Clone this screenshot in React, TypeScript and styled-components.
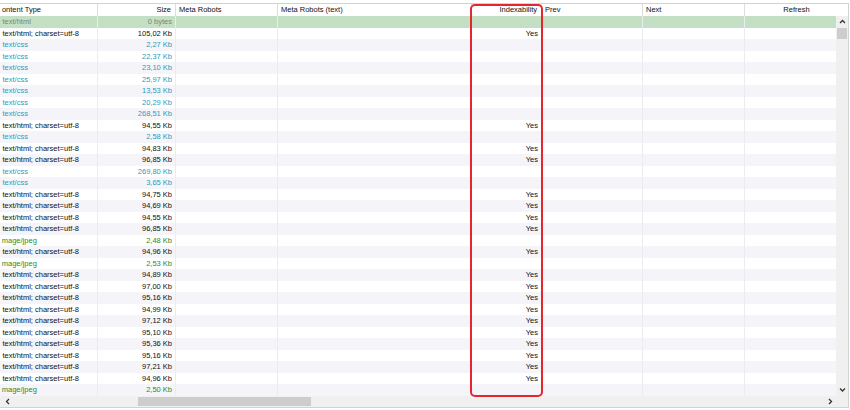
import React from "react";
import styled, { createGlobalStyle } from "styled-components";

const Global = createGlobalStyle`
  html, body { margin: 0; padding: 0; background: #ffffff; overflow: hidden; }
  body { font-family: "Liberation Sans", Arial, sans-serif; }
`;

const COLS = "98px 78px 102px 194px 70px 101px 102px";

const Frame = styled.div`
  position: relative;
  margin-top: 3px;
  width: 849px;
  height: 405px;
  box-sizing: border-box;
  border-top: 1px solid #d2d2d2;
  border-right: 1px solid #d2d2d2;
  border-bottom: 1px solid #d2d2d2;
  display: flex;
  flex-direction: column;
  font-size: 7.5px;
  overflow: hidden;
`;

const HeaderRow = styled.div`
  display: grid;
  grid-template-columns: ${COLS} 1fr;
  height: 12px;
  background: #ffffff;
  color: #111111;
`;

type Align = "left" | "right" | "center";

const HeadCell = styled.div<{ $align: Align }>`
  box-sizing: border-box;
  border-right: 1px solid #dedede;
  line-height: 12px;
  white-space: nowrap;
  overflow: hidden;
  text-align: ${(p) => p.$align};
  padding: ${(p) => (p.$align === "right" ? "0 4px 0 0" : p.$align === "left" ? "0 0 0 3px" : "0")};
  &:last-child { border-right: none; }
`;

const FirstHeadCell = styled(HeadCell)`
  padding-left: 2px;
`;

const Clip = styled.span<{ $indent: number }>`
  display: block;
  overflow: hidden;
  white-space: nowrap;
  text-indent: ${(p) => p.$indent}px;
`;

const Middle = styled.div`
  display: flex;
  flex: 0 0 auto;
`;

const Rows = styled.div`
  width: 836px;
  display: flex;
  flex-direction: column;
`;

type Kind = "root" | "html" | "css" | "jpeg";

const kindColor: Record<Kind, string> = {
  root: "#7a857a",
  html: "#111111",
  css: "#2a9dbf",
  jpeg: "#2b8a2b",
};

const Row = styled.div<{ $kind: Kind; $stripe: boolean }>`
  display: grid;
  grid-template-columns: ${COLS} 91px;
  height: 11.5px;
  line-height: 11.5px;
  color: ${(p) => kindColor[p.$kind]};
  background: ${(p) =>
    p.$kind === "root" ? "#c4e0c4" : p.$stripe ? "#f4f4f9" : "#ffffff"};
`;

const Cell = styled.div<{ $align: Align; $plain?: boolean }>`
  box-sizing: border-box;
  border-right: 1px solid #ebebf0;
  white-space: nowrap;
  overflow: hidden;
  text-align: ${(p) => p.$align};
  padding: ${(p) => (p.$align === "right" ? "0 3px 0 0" : "0 0 0 3px")};
  color: ${(p) => (p.$plain ? "#111111" : "inherit")};
  &:last-child { border-right: none; }
`;

const FirstCell = styled(Cell)`
  padding-left: 2px;
`;

const VScroll = styled.div`
  width: 12px;
  background: #f0f0f0;
  display: flex;
  flex-direction: column;
  align-items: center;
  box-sizing: border-box;
  padding: 3px 0 3px 0;
`;

const VThumb = styled.div`
  width: 10px;
  height: 11px;
  margin-top: 3px;
  background: #cdcdcd;
`;

const Spacer = styled.div`
  flex: 1;
`;

const Bottom = styled.div`
  display: flex;
  flex: 1;
  background: #f0f0f0;
`;

const HTrack = styled.div`
  width: 836px;
  display: flex;
  align-items: center;
  box-sizing: border-box;
  padding: 0 3px 0 5px;
`;

const HThumb = styled.div`
  width: 173px;
  height: 9px;
  margin-left: 127px;
  background: #cdcdcd;
`;

const Corner = styled.div`
  flex: 1;
  background: #f0f0f0;
`;

const Highlight = styled.div`
  position: absolute;
  left: 470px;
  top: 0px;
  width: 73px;
  height: 393px;
  box-sizing: border-box;
  border: 2px solid #e6262e;
  border-radius: 5px;
  pointer-events: none;
`;

const Chevron = ({ dir }: { dir: "up" | "down" | "left" | "right" }) => {
  const pts: Record<string, string> = {
    up: "1,4 3.5,1.5 6,4",
    down: "1,1.5 3.5,4 6,1.5",
    left: "4,1 1.5,3.5 4,6",
    right: "2,1 4.5,3.5 2,6",
  };
  const horiz = dir === "up" || dir === "down";
  return (
    <svg width={horiz ? 7 : 6} height={horiz ? 6 : 7} viewBox={horiz ? "0 0 7 6" : "0 0 6 7"}>
      <polyline points={pts[dir]} fill="none" stroke="#333" strokeWidth="1.3" />
    </svg>
  );
};

type Item = { kind: Kind; type: string; size: string; yes?: boolean };

const H = "text/html; charset=utf-8";
const data: Item[] = [
  { kind: "root", type: "text/html", size: "0 bytes" },
  { kind: "html", type: H, size: "105,02 Kb", yes: true },
  { kind: "css", type: "text/css", size: "2,27 Kb" },
  { kind: "css", type: "text/css", size: "22,37 Kb" },
  { kind: "css", type: "text/css", size: "23,10 Kb" },
  { kind: "css", type: "text/css", size: "25,97 Kb" },
  { kind: "css", type: "text/css", size: "13,53 Kb" },
  { kind: "css", type: "text/css", size: "20,29 Kb" },
  { kind: "css", type: "text/css", size: "268,51 Kb" },
  { kind: "html", type: H, size: "94,55 Kb", yes: true },
  { kind: "css", type: "text/css", size: "2,58 Kb" },
  { kind: "html", type: H, size: "94,83 Kb", yes: true },
  { kind: "html", type: H, size: "96,85 Kb", yes: true },
  { kind: "css", type: "text/css", size: "269,80 Kb" },
  { kind: "css", type: "text/css", size: "3,65 Kb" },
  { kind: "html", type: H, size: "94,75 Kb", yes: true },
  { kind: "html", type: H, size: "94,69 Kb", yes: true },
  { kind: "html", type: H, size: "94,55 Kb", yes: true },
  { kind: "html", type: H, size: "96,85 Kb", yes: true },
  { kind: "jpeg", type: "image/jpeg", size: "2,48 Kb" },
  { kind: "html", type: H, size: "94,96 Kb", yes: true },
  { kind: "jpeg", type: "image/jpeg", size: "2,53 Kb" },
  { kind: "html", type: H, size: "94,89 Kb", yes: true },
  { kind: "html", type: H, size: "97,00 Kb", yes: true },
  { kind: "html", type: H, size: "95,16 Kb", yes: true },
  { kind: "html", type: H, size: "94,99 Kb", yes: true },
  { kind: "html", type: H, size: "97,12 Kb", yes: true },
  { kind: "html", type: H, size: "95,10 Kb", yes: true },
  { kind: "html", type: H, size: "95,36 Kb", yes: true },
  { kind: "html", type: H, size: "95,16 Kb", yes: true },
  { kind: "html", type: H, size: "97,21 Kb", yes: true },
  { kind: "html", type: H, size: "94,96 Kb", yes: true },
  { kind: "jpeg", type: "image/jpeg", size: "2,50 Kb" },
];

export default function App() {
  return (
    <>
      <Global />
      <Frame>
        <HeaderRow>
          <FirstHeadCell $align="left">
            <Clip $indent={-5.5}>Content Type</Clip>
          </FirstHeadCell>
          <HeadCell $align="right">Size</HeadCell>
          <HeadCell $align="left">Meta Robots</HeadCell>
          <HeadCell $align="left">Meta Robots (text)</HeadCell>
          <HeadCell $align="right">Indexability</HeadCell>
          <HeadCell $align="left">Prev</HeadCell>
          <HeadCell $align="left">Next</HeadCell>
          <HeadCell $align="center">Refresh</HeadCell>
        </HeaderRow>
        <Middle>
          <Rows>
            {data.map((r, i) => (
              <Row key={i} $kind={r.kind} $stripe={i % 2 === 0}>
                <FirstCell $align="left">
                  <Clip $indent={r.kind === "jpeg" ? -1.9 : 0.5}>{r.type}</Clip>
                </FirstCell>
                <Cell $align="right">{r.size}</Cell>
                <Cell $align="left" />
                <Cell $align="left" />
                <Cell $align="right" $plain>{r.yes ? "Yes" : ""}</Cell>
                <Cell $align="left" />
                <Cell $align="left" />
                <Cell $align="left" />
              </Row>
            ))}
          </Rows>
          <VScroll>
            <Chevron dir="up" />
            <VThumb />
            <Spacer />
            <Chevron dir="down" />
          </VScroll>
        </Middle>
        <Bottom>
          <HTrack>
            <Chevron dir="left" />
            <HThumb />
            <Spacer />
            <Chevron dir="right" />
          </HTrack>
          <Corner />
        </Bottom>
        <Highlight />
      </Frame>
    </>
  );
}
